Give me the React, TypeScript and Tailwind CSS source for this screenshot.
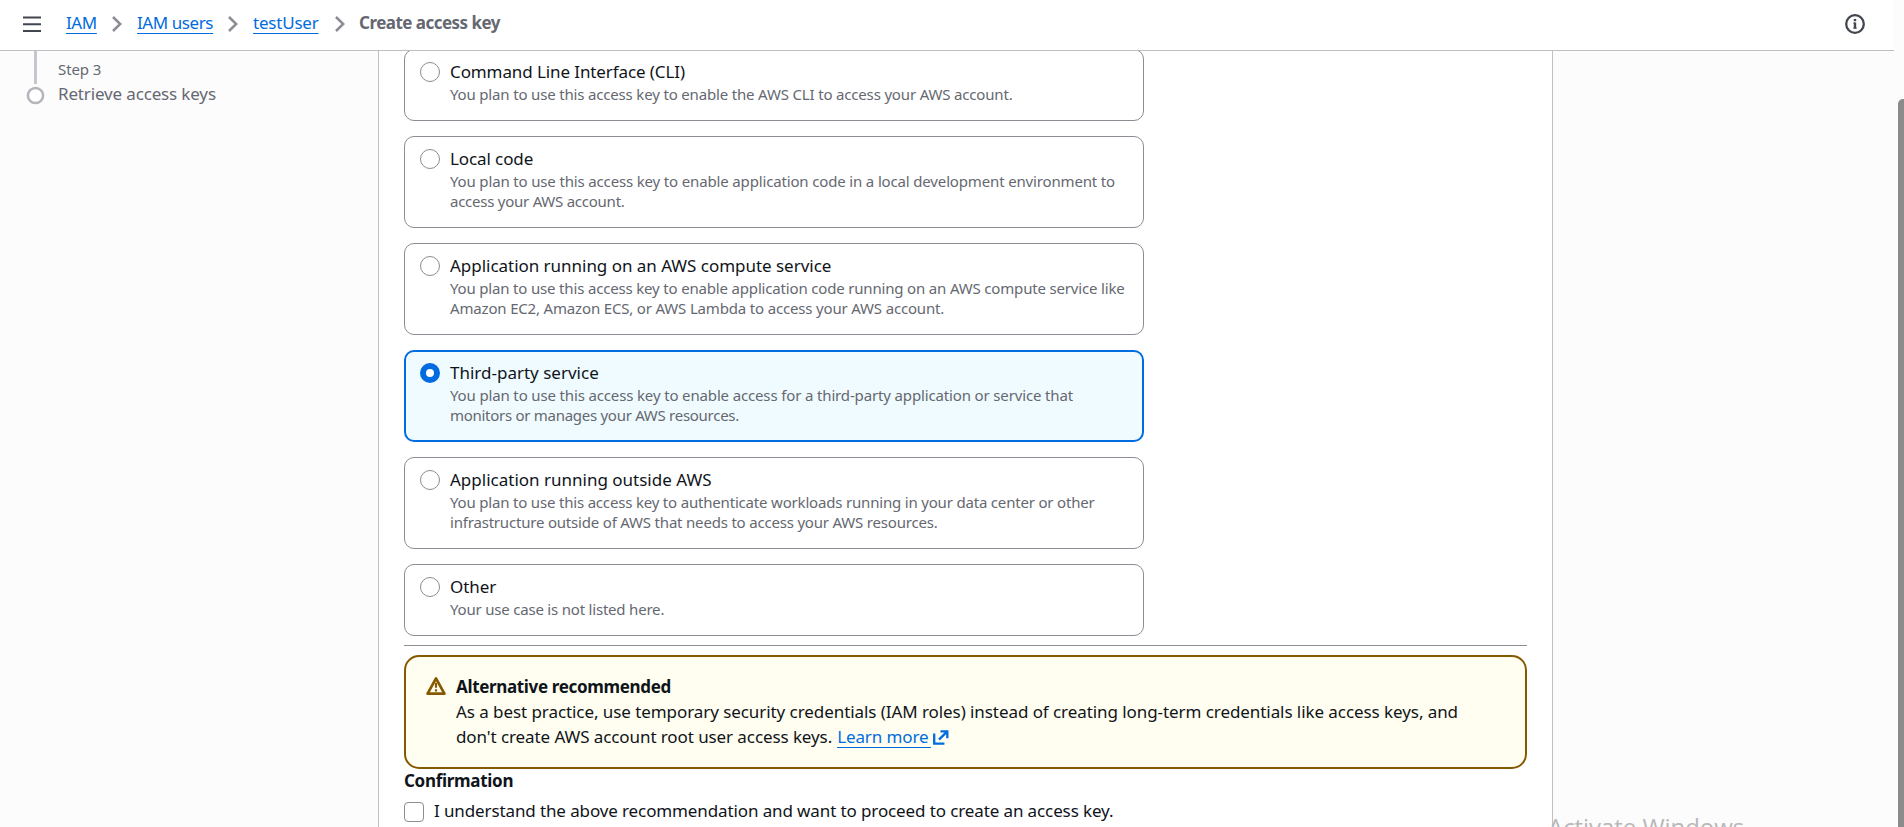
import clsx from "clsx";

const useCases = [
  {
    title: "Command Line Interface (CLI)",
    titleClass: "tracking-[-0.1px]",
    lines: [{ text: "You plan to use this access key to enable the AWS CLI to access your AWS account.", cls: "tracking-[-0.168px]" }],
  },
  {
    title: "Local code",
    titleClass: "tracking-[-0.1px]",
    lines: [
      { text: "You plan to use this access key to enable application code in a local development environment to", cls: "tracking-[-0.154px]" },
      { text: "access your AWS account.", cls: "tracking-[-0.25px]" },
    ],
  },
  {
    title: "Application running on an AWS compute service",
    titleClass: "tracking-[-0.03px]",
    lines: [
      { text: "You plan to use this access key to enable application code running on an AWS compute service like", cls: "tracking-[-0.172px]" },
      { text: "Amazon EC2, Amazon ECS, or AWS Lambda to access your AWS account.", cls: "tracking-[-0.17px]" },
    ],
  },
  {
    title: "Third-party service",
    titleClass: "tracking-normal",
    selected: true,
    lines: [
      { text: "You plan to use this access key to enable access for a third-party application or service that", cls: "tracking-[-0.145px]" },
      { text: "monitors or manages your AWS resources.", cls: "tracking-[-0.28px]" },
    ],
  },
  {
    title: "Application running outside AWS",
    titleClass: "tracking-normal",
    lines: [
      { text: "You plan to use this access key to authenticate workloads running in your data center or other", cls: "tracking-[-0.185px]" },
      { text: "infrastructure outside of AWS that needs to access your AWS resources.", cls: "tracking-[-0.194px]" },
    ],
  },
  {
    title: "Other",
    titleClass: "tracking-[-0.05px]",
    lines: [{ text: "Your use case is not listed here.", cls: "tracking-[-0.2px]" }],
  },
];

const crumbs = [
  { label: "IAM", className: "w-[46px] tracking-[-0.4px]" },
  { label: "IAM users", className: "w-[91px] tracking-[-0.42px]" },
  { label: "testUser", className: "w-[82px] tracking-[-0.21px]" },
];

function Chevron() {
  return (
    <svg className="h-[18px] w-[10px] shrink-0" viewBox="0 0 10 18" fill="none" stroke="#8c8c94" strokeWidth="2.5">
      <path d="M1 2l7.2 7L1 16" />
    </svg>
  );
}

function Header() {
  return (
    <header className="mr-[10px] flex h-[51px] shrink-0 items-start border-b border-[#c0c0c4] bg-white pl-[23px] text-[17px] leading-[25px]">
      <svg className="mt-[15px] h-[18px] w-[18px]" viewBox="0 0 18 18" stroke="#424650" strokeWidth="2">
        <path d="M0 2.5h18M0 9.2h18M0 16h18" />
      </svg>
      <nav className="ml-[25px] flex items-start pt-[10px]">
        {crumbs.map((crumb) => (
          <div key={crumb.label} className="flex">
            <a className={clsx("text-[#006ce0] underline decoration-1 underline-offset-[4px] whitespace-nowrap", crumb.className)}>
              {crumb.label}
            </a>
            <span className="w-[25px] pt-[5px]">
              <Chevron />
            </span>
          </div>
        ))}
        <span className="ml-[-1px] font-bold tracking-[-0.52px] text-[#656871]">Create access key</span>
      </nav>
      <svg className="mt-[14px] mr-[29px] ml-auto h-5 w-5" viewBox="0 0 20 20" fill="none" stroke="#424650">
        <circle cx="10" cy="10" r="8.8" strokeWidth="2.3" />
        <path d="M10 5v2.2M10 8.6v6" strokeWidth="2.4" />
        <path d="M8.3 9.1H10M8.2 14.1h3.6" strokeWidth="1" />
      </svg>
    </header>
  );
}

function Steps() {
  return (
    <aside className="flex w-[378px] shrink-0 pl-[26px] text-[#656871]">
      <div className="flex w-[19px] flex-col items-center">
        <div className="h-[33px] w-[3px] bg-[#c6c6cd]" />
        <svg className="mt-[2px] h-[19px] w-[19px]" viewBox="0 0 19 19">
          <circle cx="9.5" cy="9.5" r="7.6" fill="#fff" stroke="#b4b4bb" strokeWidth="2.5" />
        </svg>
      </div>
      <div className="ml-[13px] pt-[8px]">
        <div className="text-[15px] leading-[20px] tracking-[-0.1px]">Step 3</div>
        <div className="mt-[2px] text-[17px] leading-[25px] tracking-[-0.15px]">Retrieve access keys</div>
      </div>
    </aside>
  );
}

function Radio({ checked }: { checked?: boolean }) {
  return (
    <span
      className={clsx(
        "h-5 w-5 shrink-0 rounded-full bg-white",
        checked ? "border-[6px] border-[#006ce0]" : "border border-[#8c8c94]"
      )}
    />
  );
}

function UseCases() {
  return (
    <div className="mt-[-2px] flex w-[740px] flex-col gap-[15px]">
      {useCases.map((item) => (
        <label
          key={item.title}
          className={clsx(
            "flex rounded-[10px]",
            item.lines.length > 1 ? "h-[92px]" : "h-[72px]",
            item.selected
              ? "border-2 border-[#006ce0] bg-[#f0fbff] pt-[8px] pl-[14px]"
              : "border border-[#8c8c94] bg-white pt-[9px] pl-[15px]"
          )}
        >
          <span className="flex pt-[3px]">
            <Radio checked={item.selected} />
          </span>
          <span className="ml-[10px] block whitespace-nowrap">
            <span className={clsx("block text-[17px] leading-[25px] text-[#0f141a]", item.titleClass)}>{item.title}</span>
            {item.lines.map((line) => (
              <span key={line.text} className={clsx("block text-[15px] leading-[20px] text-[#656871]", line.cls)}>
                {line.text}
              </span>
            ))}
          </span>
        </label>
      ))}
    </div>
  );
}

function Alert() {
  return (
    <div className="mt-[9px] flex h-[114px] rounded-[15px] border-2 border-[#855900] bg-[#fffef0] pt-[17px] pl-[20px] text-[17px] leading-[25px]">
      <svg className="mt-[2px] h-5 w-5 shrink-0" viewBox="0 0 20 20" fill="none" stroke="#855900">
        <path d="M10 2.4L1.6 17.7h16.8z" strokeWidth="2.7" strokeLinejoin="round" />
        <path d="M10 6.8v4.9M10 13.2v2.2" strokeWidth="2.2" />
      </svg>
      <div className="ml-[10px] whitespace-nowrap text-[#0f141a]">
        <div className="font-bold tracking-[-0.34px]">Alternative recommended</div>
        <div className="tracking-[-0.07px]">
          As a best practice, use temporary security credentials (IAM roles) instead of creating long-term credentials like access keys, and
        </div>
        <div className="flex tracking-[-0.09px]">
          <span>don't create AWS account root user access keys.</span>
          <a className="ml-[5px] flex text-[#006ce0]">
            <span className="h-[24px] w-[94px] border-b border-[#006ce0] tracking-[-0.1px]">Learn more</span>
            <svg className="mt-[6px] ml-[2px] h-4 w-4" viewBox="0 0 16 16" fill="none" stroke="#006ce0" strokeWidth="2.3">
              <path d="M1.2 3.5v10.1H11.4" />
              <path d="M6 9.6l8-8" />
              <path d="M7.5 1.3h6.8v6.9" />
            </svg>
          </a>
        </div>
      </div>
    </div>
  );
}

export default function App() {
  return (
    <div className="relative flex h-[827px] w-[1904px] flex-col overflow-hidden bg-[#fcfcfd] font-['Noto_Sans',sans-serif]">
      <Header />
      <div className="flex min-h-0 flex-1 overflow-hidden">
        <Steps />
        <main className="w-[1175px] shrink-0 border-x border-[#c0c0c4] bg-white px-[25px]">
          <UseCases />
          <div className="mt-[9px] h-px bg-[#8c8c94]" />
          <Alert />
          <div className="text-[17px] text-[#0f141a]">
            <div className="leading-[23px] font-bold tracking-[-0.3px]">Confirmation</div>
            <label className="mt-[6px] flex leading-[25px]">
              <span className="mt-[4px] h-5 w-5 rounded-[4px] border border-[#8c8c94] bg-white" />
              <span className="ml-[10px] tracking-[-0.115px]">
                I understand the above recommendation and want to proceed to create an access key.
              </span>
            </label>
          </div>
        </main>
      </div>

      {/* Scrollbar thumb */}
      <div className="absolute top-[99px] right-0 bottom-0 w-[6px] rounded-tl-[5px] bg-[#8b8b8b]" />

      {/* System watermark */}
      <div className="absolute top-[810px] left-[1548px] font-['Open_Sans',sans-serif] text-[24px] leading-[34px] tracking-[-0.05px] whitespace-nowrap text-[#b8b8b8]">
        Activate Windows
      </div>
    </div>
  );
}
